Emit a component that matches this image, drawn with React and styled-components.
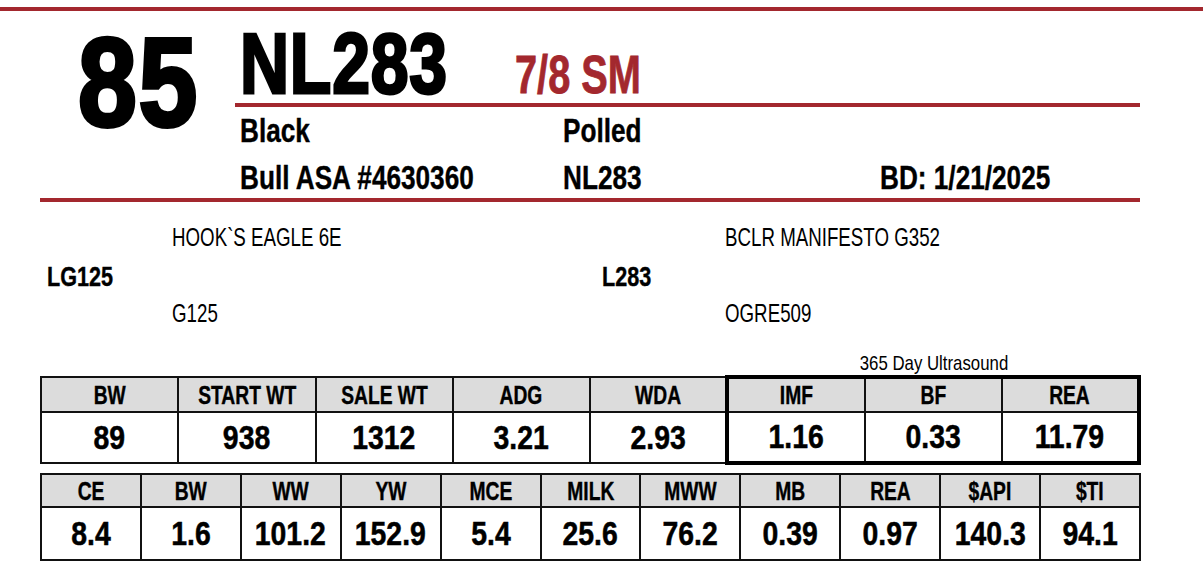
import React from 'react';
import styled, { createGlobalStyle } from 'styled-components';

const RED = '#a3282e';
const SANS = `"Liberation Sans", Arial, sans-serif`;

const GlobalStyle = createGlobalStyle`
    body {
        margin: 0;
        background: #ffffff;
        color: #000000;
        font-family: ${SANS};
    }
`;

const performance = [
    { label: 'BW', value: '89' },
    { label: 'START WT', value: '938' },
    { label: 'SALE WT', value: '1312' },
    { label: 'ADG', value: '3.21' },
    { label: 'WDA', value: '2.93' },
    { label: 'IMF', value: '1.16', box: 'left' },
    { label: 'BF', value: '0.33', box: 'mid' },
    { label: 'REA', value: '11.79', box: 'right' },
];

const epds = [
    { label: 'CE', value: '8.4' },
    { label: 'BW', value: '1.6' },
    { label: 'WW', value: '101.2' },
    { label: 'YW', value: '152.9' },
    { label: 'MCE', value: '5.4' },
    { label: 'MILK', value: '25.6' },
    { label: 'MWW', value: '76.2' },
    { label: 'MB', value: '0.39' },
    { label: 'REA', value: '0.97' },
    { label: '$API', value: '140.3' },
    { label: '$TI', value: '94.1' },
];

const App = () => {
    return (
        <Page>
            <GlobalStyle />
            <Rule $full />
            <Header>
                <LotNumber>85</LotNumber>
                <HeaderMain>
                    <TitleRow>
                        <Tag>NL283</Tag>
                        <Breed>7/8 SM</Breed>
                    </TitleRow>
                    <Rule />
                    <InfoGrid>
                        <Info>Black</Info>
                        <Info>Polled</Info>
                        <Info />
                        <Info>Bull ASA #4630360</Info>
                        <Info>NL283</Info>
                        <Info>BD: 1/21/2025</Info>
                    </InfoGrid>
                </HeaderMain>
            </Header>
            <Rule $wide />

            <Pedigree>
                <span />
                <Ancestor>HOOK`S EAGLE 6E</Ancestor>
                <span />
                <Ancestor>BCLR MANIFESTO G352</Ancestor>
                <Parent>LG125</Parent>
                <span />
                <Parent>L283</Parent>
                <span />
                <span />
                <Ancestor>G125</Ancestor>
                <span />
                <Ancestor>OGRE509</Ancestor>
            </Pedigree>

            <Tables>
                <UltrasoundNote>365 Day Ultrasound</UltrasoundNote>
                <StatTable>
                    <tbody>
                        <tr>
                            {performance.map((p) => (
                                <HeadCell key={p.label} $box={p.box} $top>
                                    <Squeeze $x={0.74}>{p.label}</Squeeze>
                                </HeadCell>
                            ))}
                        </tr>
                        <tr>
                            {performance.map((p) => (
                                <ValueCell key={p.label} $box={p.box} $bottom>
                                    <Squeeze $x={0.86}>{p.value}</Squeeze>
                                </ValueCell>
                            ))}
                        </tr>
                    </tbody>
                </StatTable>
                <StatTable $gap>
                    <tbody>
                        <tr>
                            {epds.map((p, i) => (
                                <HeadCell key={i} $short>
                                    <Squeeze $x={0.74}>{p.label}</Squeeze>
                                </HeadCell>
                            ))}
                        </tr>
                        <tr>
                            {epds.map((p, i) => (
                                <ValueCell key={i} $tall>
                                    <Squeeze $x={0.86}>{p.value}</Squeeze>
                                </ValueCell>
                            ))}
                        </tr>
                    </tbody>
                </StatTable>
            </Tables>
        </Page>
    );
};

export default App;

const Page = styled.div`
    width: 1203px;
    padding-top: 7px;
`;

const Rule = styled.div`
    height: 4px;
    background: ${RED};
    ${({ $full }) => $full && `width: 100%;`}
    ${({ $wide }) => $wide && `margin: 0 63px 0 40px;`}
`;

// condensed look: the page font has no narrow cut, so text is squeezed sideways
const Squeeze = styled.span`
    display: inline-block;
    white-space: nowrap;
    transform: scaleX(${({ $x }) => $x});
    transform-origin: center;
`;

const Header = styled.div`
    display: flex;
    margin: 0 63px 0 40px;
    height: 187px;
`;

const LotNumber = styled.div`
    width: 195px;
    box-sizing: border-box;
    padding-left: 38px;
    margin-top: 22px;
    font-size: 126px;
    line-height: 100px;
    font-weight: 700;
    letter-spacing: 2px;
    -webkit-text-stroke: 4px #000;
    transform: scaleX(0.84);
    transform-origin: 38px center;
`;

const HeaderMain = styled.div`
    flex: 1;
    display: flex;
    flex-direction: column;
`;

const TitleRow = styled.div`
    display: grid;
    grid-template-columns: 275px 1fr;
    align-items: baseline;
    height: 92px;
    box-sizing: border-box;
    padding: 10px 0 0 5px;
`;

const Tag = styled.div`
    font-size: 86px;
    line-height: 85px;
    font-weight: 700;
    letter-spacing: 1px;
    white-space: nowrap;
    -webkit-text-stroke: 3px #000;
    transform: scaleX(0.79);
    transform-origin: left center;
`;

const Breed = styled.div`
    font-size: 53px;
    line-height: 52px;
    font-weight: 700;
    color: ${RED};
    white-space: nowrap;
    -webkit-text-stroke: 0.8px ${RED};
    transform: scaleX(0.75);
    transform-origin: left center;
`;

const InfoGrid = styled.div`
    display: grid;
    grid-template-columns: 323px 317px 1fr;
    grid-auto-rows: 47px;
    height: 91px;
    padding-left: 5px;
`;

const Info = styled.div`
    font-size: 34px;
    line-height: 47px;
    font-weight: 700;
    white-space: nowrap;
    -webkit-text-stroke: 0.4px #000;
    transform: scaleX(0.77);
    transform-origin: left center;
`;

const Pedigree = styled.div`
    display: grid;
    grid-template-columns: 125px 430px 123px 1fr;
    grid-template-rows: 40px 36px 38px;
    margin: 0 63px 0 40px;
    padding: 16px 0 0 7px;
`;

const Ancestor = styled.div`
    font-size: 26px;
    line-height: 38px;
    white-space: nowrap;
    transform: scaleX(0.72);
    transform-origin: left center;
`;

const Parent = styled.div`
    font-size: 27px;
    line-height: 38px;
    font-weight: 700;
    white-space: nowrap;
    -webkit-text-stroke: 0.4px #000;
    transform: scaleX(0.8);
    transform-origin: left center;
`;

const Tables = styled.div`
    margin: 19px 63px 0 40px;
    display: flex;
    flex-direction: column;
`;

const UltrasoundNote = styled.div`
    align-self: flex-end;
    width: 412px;
    text-align: center;
    font-size: 21px;
    line-height: 24px;
    white-space: nowrap;
    transform: scaleX(0.8);
`;

const StatTable = styled.table`
    width: 1101px;
    table-layout: fixed;
    border-collapse: collapse;
    ${({ $gap }) => $gap && `margin-top: 8px;`}
`;

const boxBorders = ({ $box, $top, $bottom }) => {
    if (!$box) return '';
    let css = '';
    if ($top) css += 'border-top: 4px solid #000;';
    if ($bottom) css += 'border-bottom: 4px solid #000;';
    if ($box === 'left') css += 'border-left: 4px solid #000;';
    if ($box === 'right') css += 'border-right: 4px solid #000;';
    return css;
};

const HeadCell = styled.td`
    background: #dcdcdc;
    border: 2px solid #111;
    height: ${({ $short }) => ($short ? '31px' : '32px')};
    padding: 0;
    text-align: center;
    font-size: 26px;
    line-height: 30px;
    font-weight: 700;
    -webkit-text-stroke: 0.4px #000;
    ${boxBorders}
`;

const ValueCell = styled.td`
    background: #ffffff;
    border: 2px solid #111;
    height: ${({ $tall }) => ($tall ? '51px' : '48px')};
    padding: 0;
    text-align: center;
    font-size: 33px;
    line-height: 40px;
    font-weight: 700;
    -webkit-text-stroke: 0.5px #000;
    ${boxBorders}
`;
